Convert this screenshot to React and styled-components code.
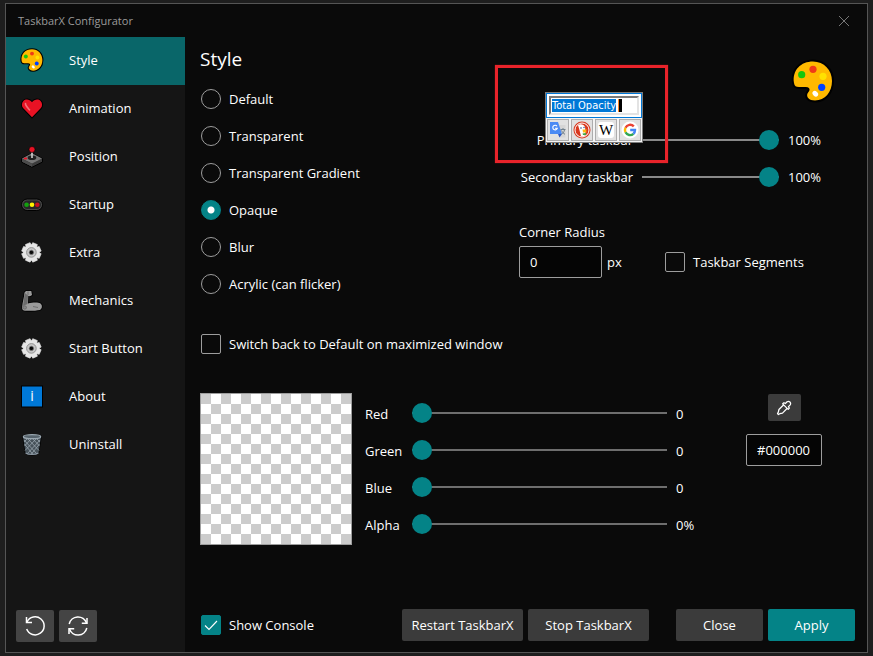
import React, { useState, useEffect, useRef } from "react";
import styled, { createGlobalStyle } from "styled-components";

const GlobalStyle = createGlobalStyle`
  * {
    box-sizing: border-box;
  }
  body {
    margin: 0;
    background: #1e1e1e;
    color: #fff;
    font-family: "Open Sans", "Noto Sans", sans-serif;
    font-size: 13px;
    line-height: 20px;
  }
  input,
  button {
    font: inherit;
    color: inherit;
    margin: 0;
  }
`;

const Desktop = styled.div`
  min-height: 100vh;
  padding: 3px 5px;
  display: flex;
`;
const Window = styled.div`
  flex: 1;
  display: flex;
  flex-direction: column;
  background: #0a0a0a;
  border: 1px solid #555;
`;
const TitleBar = styled.header`
  display: flex;
  align-items: center;
  justify-content: space-between;
  height: 33px;
  padding: 0 17px 0 12px;
  font-size: 11px;
  color: #9a9a9a;
`;
const CloseButton = styled.button`
  display: flex;
  padding: 0;
  border: none;
  background: none;
`;
const Body = styled.div`
  flex: 1;
  display: flex;
`;

const Sidebar = styled.aside`
  width: 179px;
  display: flex;
  flex-direction: column;
  justify-content: space-between;
  background: #151515;
`;
const NavLink = styled.a`
  display: flex;
  align-items: center;
  gap: 25px;
  height: 48px;
  padding: 0 0 2px 14px;
  color: #fff;
  text-decoration: none;
  background: ${(props) => (props.$active ? "#096669" : "none")};
`;
const SidebarTools = styled.div`
  display: flex;
  gap: 5px;
  padding: 0 10px 10px;
`;
const Button = styled.button`
  display: flex;
  align-items: center;
  justify-content: center;
  width: ${(props) => props.$width};
  height: ${(props) => props.$height || "32px"};
  padding: 0;
  border: none;
  border-radius: 2px;
  white-space: nowrap;
  background: ${(props) => {
    if (props.$primary) return "#048387";
    return props.$light ? "#444" : "#3b3b3b";
  }};
`;

const Main = styled.main`
  flex: 1;
  display: flex;
  flex-direction: column;
  padding: 0 12px 11px 15px;
`;
const TopArea = styled.div`
  display: flex;
  justify-content: space-between;
`;
const Title = styled.h1`
  margin: 8px 0 7px;
  font-size: 19px;
  font-weight: 400;
  line-height: 28px;
`;
const Choice = styled.label`
  display: flex;
  align-items: center;
  gap: 8px;
  height: ${(props) => props.$height || "37px"};
  padding-left: 1px;
`;
const Radio = styled.input`
  appearance: none;
  width: 20px;
  height: 20px;
  border: 1px solid #9d9d9d;
  border-radius: 50%;
  &:checked {
    border-color: #048387;
    background: radial-gradient(circle, #fff 3px, #048387 4px);
  }
`;
const CheckWrap = styled.span`
  position: relative;
  display: flex;
  & > svg {
    position: absolute;
    inset: 0;
    pointer-events: none;
  }
`;
const CheckInput = styled.input`
  appearance: none;
  width: 20px;
  height: 20px;
  border: 1px solid #9d9d9d;
  border-radius: 2px;
  &:checked {
    border-color: #048387;
    background: #048387;
  }
`;
const Slider = styled.input`
  appearance: none;
  flex: 1;
  min-width: 0;
  height: 20px;
  background: none;
  &::-webkit-slider-runnable-track {
    height: 2px;
    background: ${(props) => props.$track || "#6e6e6e"};
  }
  &::-webkit-slider-thumb {
    appearance: none;
    width: 20px;
    height: 20px;
    margin-top: -9px;
    border-radius: 50%;
    background: #048387;
  }
`;
const TextField = styled.input`
  width: ${(props) => props.$width};
  height: 32px;
  padding: 0 0 0 10px;
  border: 1px solid #9d9d9d;
  border-radius: 2px;
  background: #050505;
`;

const Opacity = styled.section`
  position: relative;
  width: 336px;
`;
const PaletteHolder = styled.div`
  display: flex;
  justify-content: flex-end;
  padding: 22px 20px 18px 0;
`;
const OpacityRow = styled.div`
  display: flex;
  align-items: center;
  gap: 9px;
  height: 37px;
  & > label {
    width: 114px;
    text-align: right;
    white-space: nowrap;
  }
  & > output {
    width: 67px;
  }
`;
const Corner = styled.div`
  padding-top: 27px;
`;
const CornerRow = styled.div`
  display: flex;
  align-items: center;
  padding-top: 4px;
  & > span {
    width: 62px;
    padding-left: 5px;
  }
`;

// red marker and the lookup popup both float over the sliders
const Marker = styled.div`
  position: absolute;
  left: -24px;
  top: 28px;
  width: 173px;
  height: 98px;
  border: 3px solid #e8232a;
  box-shadow: 0 0 1px #a0181d;
  pointer-events: none;
`;
const Popup = styled.div`
  position: absolute;
  left: 26px;
  top: 55px;
  width: 98px;
  border: 1px solid #7c7c7c;
  background: #f4f4f4;
`;
const LookupFrame = styled.div`
  padding: 2px;
  border: 1px solid #0078d7;
  background: #fff;
`;
const LookupBox = styled.div`
  display: flex;
  align-items: center;
  height: 19px;
  border: 2px solid;
  border-color: #7a7a7a #e3e3e3 #e3e3e3 #7a7a7a;
`;
const LookupInput = styled.input`
  width: 67px;
  height: 13px;
  padding: 0 0 0 1px;
  border: none;
  outline: none;
  background: #fff;
  color: #000;
  font-family: "DejaVu Sans Condensed", "DejaVu Sans", sans-serif;
  font-size: 11px;
  line-height: 13px;
  &::selection {
    background: #0078d7;
    color: #fff;
  }
`;
const Caret = styled.span`
  width: 4px;
  height: 13px;
  border-left: 1px solid #ff8728;
  background: #000;
`;
const LookupTools = styled.div`
  display: flex;
  justify-content: space-between;
  padding: 1px;
`;
const LookupButton = styled.button`
  display: flex;
  padding: 1px;
  border: 1px solid #adadad;
  background: #e1e1e1;
`;

const MaximizedOption = styled.div`
  padding-top: 23px;
`;
const ColorArea = styled.section`
  display: flex;
  align-items: flex-start;
  margin-top: 31px;
`;
const Swatch = styled.div`
  width: 152px;
  height: 152px;
  border: 1px solid #9d9d9d;
  background: repeating-conic-gradient(#fff 0 25%, #ccc 0 50%) 0 0 / 20px 20px;
`;
const Channels = styled.div`
  flex: 1;
  padding: 1px 0 0 13px;
`;
const ChannelRow = styled.div`
  display: flex;
  align-items: center;
  height: 37px;
  & > label {
    width: 47px;
    padding-top: 2px;
  }
  & > output {
    width: 33px;
    padding: 2px 0 0 9px;
  }
`;
const Picker = styled.div`
  display: flex;
  flex-direction: column;
  align-items: center;
  gap: 13px;
  padding: 1px 33px 0 46px;
`;
const Footer = styled.footer`
  display: flex;
  align-items: center;
  justify-content: space-between;
  margin-top: auto;
`;
const Actions = styled.div`
  display: flex;
  gap: 5px;
`;
const ActionGroups = styled.div`
  display: flex;
  gap: 27px;
`;

const PaletteIcon = ({ size }) => (
  <svg width={size} height={size} viewBox="0 0 44 44">
    <path
      d="M3 24C1 11 10 2.5 22 2.5C33 2.5 41 11 41 22C41 33 34 41.5 24 41.5C18 41.5 15 38 16.5 34.5C17 33 19 32 18.5 30C18 27.5 14 28 8 28C5 28 3.5 27 3 24Z"
      fill="#ffb900"
      stroke="#000"
      strokeWidth="4"
      paintOrder="stroke"
      strokeLinejoin="round"
    />
    <circle cx="10.7" cy="15.7" r="3.6" fill="#16c60c" />
    <circle cx="22" cy="10.3" r="3.6" fill="#f03a17" />
    <circle cx="32" cy="17.3" r="3.6" fill="#ffe100" />
    <circle cx="30.7" cy="28.3" r="3.6" fill="#0040ff" />
    <ellipse cx="24.3" cy="34.7" rx="3.2" ry="2.4" fill="#fff" transform="rotate(45 24.3 34.7)" />
  </svg>
);

const HeartIcon = () => (
  <svg width="24" height="24" viewBox="0 0 24 24">
    <path
      d="M12 21.3L3.3 12.3C1.5 10.3 1.4 6.8 3.4 4.9C5.5 2.8 9.5 2.8 12 6.3C14.5 2.8 18.5 2.8 20.6 4.9C22.6 6.8 22.5 10.3 20.7 12.3Z"
      fill="#e81224"
      stroke="#000"
      strokeWidth="2"
      paintOrder="stroke"
    />
    <path d="M5.5 7.5C5.3 9.5 7 11 9.5 13.8" fill="none" stroke="#f4717a" strokeWidth="1.6" strokeLinecap="round" />
  </svg>
);

const JoystickIcon = () => (
  <svg width="24" height="24" viewBox="0 0 24 24">
    <path d="M1.5 14.5L12 9L22.5 14.5V18L12 23.3L1.5 18Z" fill="#3b3b3b" stroke="#000" />
    <path d="M2 14.5L12 9.3L22 14.5L12 19.5Z" fill="#767676" />
    <path d="M2 15L12 20V22.8L2 17.8Z" fill="#4c4c4c" />
    <ellipse cx="12" cy="13.8" rx="4.3" ry="2.3" fill="#1f1f1f" />
    <path d="M12 7V14" stroke="#d0d0d0" strokeWidth="1.6" />
    <ellipse cx="5.5" cy="14.6" rx="1.8" ry="1" fill="#e81224" />
    <circle cx="12" cy="5.5" r="3" fill="#e81224" stroke="#000" strokeWidth="0.6" />
  </svg>
);

const TrafficIcon = () => (
  <svg width="24" height="24" viewBox="0 0 24 24">
    <rect x="1.5" y="7" width="21" height="11.5" rx="5.7" fill="#4a4a4a" stroke="#000" />
    <rect x="3" y="8.5" width="18" height="8.5" rx="4.2" fill="#262626" />
    <circle cx="6.6" cy="12.7" r="2.3" fill="#13a10e" />
    <circle cx="12" cy="12.7" r="2.3" fill="#fff100" />
    <circle cx="17.3" cy="12.7" r="2.3" fill="#c50f1f" />
  </svg>
);

const GearIcon = () => (
  <svg width="24" height="24" viewBox="0 0 24 24">
    <g transform="translate(11.4 12.4)">
      <circle r="9" fill="#000" />
      {[0, 45, 90, 135, 180, 225, 270, 315].map((angle) => (
        <path
          key={angle}
          d="M-3 -5L-2.5 -9.5H2.5L3 -5Z"
          fill="#e6e6e6"
          stroke="#e6e6e6"
          strokeLinejoin="round"
          strokeWidth="0.6"
          transform={`rotate(${angle + 22.5})`}
        />
      ))}
      <circle r="8" fill="#e6e6e6" />
      <circle r="4.8" fill="#c8c8c8" stroke="#8b8b8b" strokeWidth="0.9" />
      <circle r="2.2" fill="#0a0a0a" stroke="#777" strokeWidth="0.7" />
    </g>
  </svg>
);

const ArmIcon = () => (
  <svg width="24" height="24" viewBox="0 0 24 24">
    <path
      d="M4.5 4.5L6 3H11.3L12 7L10 8.3L8.3 8L8 15.500C12 14.5 18 14 20.5 15.5C22.5 17 22.5 20.5 20 22C15 23 7 23 3.8 22.5C2.2 22 2 20.5 2.2 18.5C2.5 14 4 10 4.5 4.5Z"
      fill="#9b9b9b"
      stroke="#000"
      strokeWidth="1.6"
      paintOrder="stroke"
    />
    <path d="M4.8 5L8 7.5L7.5 16L3 18Z" fill="#6b6b6b" />
    <circle cx="4.8" cy="19.5" r="1.7" fill="#868686" stroke="#5a5a5a" strokeWidth="0.6" />
    <path d="M8 3.5V7M13 18.5L18 19.5" stroke="#6b6b6b" strokeWidth="0.9" />
  </svg>
);

const InfoIcon = () => (
  <svg width="24" height="24" viewBox="0 0 24 24">
    <rect x="1" y="1.5" width="22" height="22" fill="#000" />
    <rect x="2" y="2.5" width="20" height="20" fill="#0078d7" />
    <text x="12" y="17" textAnchor="middle" fontSize="14" fill="#fff">
      i
    </text>
  </svg>
);

const TrashIcon = () => (
  <svg width="24" height="24" viewBox="0 0 24 24">
    <path d="M3 4.5L5.5 21C8 23.3 16 23.3 18.5 21L21 4.5Z" fill="#47525a" stroke="#000" strokeWidth="1.5" paintOrder="stroke" />
    <path
      d="M4 8L17 22M4.5 12L13 22.5M7 6L19 18.5M12 6L19.5 14M16 6L20 10M20 8L7 22M19.5 12L11 22.5M17 6L5 18.5M12 6L4.5 14M8 6L4 10"
      stroke="#9aa7b0"
      strokeWidth="0.8"
    />
    <path d="M5.6 21C8 23 16 23 18.4 21" fill="none" stroke="#8995a0" strokeWidth="1.2" />
    <ellipse cx="12" cy="4.7" rx="8.7" ry="2" fill="#56636c" stroke="#9aa7b0" strokeWidth="1.3" />
  </svg>
);

const UndoIcon = () => (
  <svg width="22" height="22" viewBox="0 0 22 22" fill="none" stroke="#fff" strokeWidth="1.5">
    <path d="M3 7A9 9 0 1 1 2.7 14" />
    <path d="M2.5 2V7.500H8" />
  </svg>
);

const RefreshIcon = () => (
  <svg width="22" height="22" viewBox="0 0 22 22" fill="none" stroke="#fff" strokeWidth="1.5">
    <path d="M2.2 9A9 9 0 0 1 19.5 8M19.8 13A9 9 0 0 1 2.5 14" />
    <path d="M20 3V8.200H14.800M2 19V13.800H7.200" />
  </svg>
);

const DropperIcon = () => (
  <svg width="16" height="16" viewBox="0 0 18 18" fill="none" stroke="#fff" strokeWidth="1.4" strokeLinejoin="round">
    <path d="M8.7 5.3L3.3 10.7L2.6 13.7L1.7 15.3L2.7 16.3L4.3 15.4L7.3 14.7L12.7 9.3" />
    <path d="M7.5 4.3L9 3L10.5 4L12.5 2C14.8 0.4 17.4 3.2 16 5.5L14 7.5L15 9L13.7 10.5Z" />
  </svg>
);

const CheckIcon = () => (
  <svg width="20" height="20" viewBox="0 0 20 20" fill="none" stroke="#fff" strokeWidth="1.1">
    <path d="M4 10.5L8 14.5L16 6" />
  </svg>
);

const TranslateIcon = () => (
  <svg width="18" height="18" viewBox="0 0 18 18">
    <path d="M7 4H16.5V16.5H11Z" fill="#d5d5d5" />
    <path d="M1 1H9L13 13H1Z" fill="#4a8af4" />
    <path d="M9 13H13L10.5 16.5Z" fill="#2a56c6" />
    <path d="M8 5.2A2.3 2.3 0 1 0 8.3 7.3H6" fill="none" stroke="#fff" strokeWidth="1.1" />
    <path d="M11.5 8.5H16.5M14 7V8.5M15.5 9C15 11.5 13.5 12.5 12.3 13.3M12.5 9.5C13.5 11.5 14.5 12.5 16 13.3" fill="none" stroke="#70808c" />
  </svg>
);

const DuckIcon = () => (
  <svg width="18" height="18" viewBox="0 0 18 18">
    <circle cx="9" cy="9" r="8.5" fill="#d9381e" />
    <circle cx="9" cy="9" r="7" fill="#d9381e" stroke="#fff" strokeWidth="1" />
    <path d="M5 4C7 2.5 11 3 12 6C12.5 8 12 9 12 10L13 14L10 15.6L8 15.3L6.2 8Z" fill="#fff" />
    <path d="M9.5 8.5H14L13 10L14 11.2L10 11.5Z" fill="#fdb913" />
    <path d="M9.5 12.5L13 12V14L10 14Z" fill="#3fa845" />
    <circle cx="8" cy="7" r="0.8" fill="#2d4f8e" />
    <circle cx="11" cy="6.5" r="0.7" fill="#2d4f8e" />
  </svg>
);

const WikiIcon = () => (
  <svg width="18" height="18" viewBox="0 0 18 18">
    <rect x="1" y="1" width="16" height="16" rx="3" fill="#fff" />
    <text x="9" y="14" textAnchor="middle" fontFamily="Liberation Serif, serif" fontSize="15" fontWeight="400" fill="#000">
      W
    </text>
  </svg>
);

const GoogleIcon = () => (
  <svg width="18" height="18" viewBox="0 0 18 18" fill="none" strokeWidth="2.4">
    <circle cx="9" cy="9" r="8.5" fill="#fff" />
    <path d="M12.8 5.4A5.1 5.1 0 0 0 4.5 6.7" stroke="#ea4335" />
    <path d="M4.5 6.7A5.1 5.1 0 0 0 4.5 11.3" stroke="#fbbc05" />
    <path d="M4.5 11.3A5.1 5.1 0 0 0 12.4 12.8" stroke="#34a853" />
    <path d="M12.4 12.8A5.1 5.1 0 0 0 14 9H9.2" stroke="#4285f4" />
  </svg>
);

const pages = [
  { name: "Style", icon: <PaletteIcon size={24} /> },
  { name: "Animation", icon: <HeartIcon /> },
  { name: "Position", icon: <JoystickIcon /> },
  { name: "Startup", icon: <TrafficIcon /> },
  { name: "Extra", icon: <GearIcon /> },
  { name: "Mechanics", icon: <ArmIcon /> },
  { name: "Start Button", icon: <GearIcon /> },
  { name: "About", icon: <InfoIcon /> },
  { name: "Uninstall", icon: <TrashIcon /> },
];

const styles = [
  "Default",
  "Transparent",
  "Transparent Gradient",
  "Opaque",
  "Blur",
  "Acrylic (can flicker)",
];

const CheckBox = ({ label, height, defaultChecked = false }) => {
  const [checked, setChecked] = useState(defaultChecked);
  return (
    <Choice $height={height}>
      <CheckWrap>
        <CheckInput
          type="checkbox"
          checked={checked}
          onChange={() => setChecked(!checked)}
        />
        {checked && <CheckIcon />}
      </CheckWrap>
      {label}
    </Choice>
  );
};

const OpacitySlider = ({ id, label }) => {
  const [value, setValue] = useState(100);
  return (
    <OpacityRow>
      <label htmlFor={id}>{label}</label>
      <Slider
        id={id}
        type="range"
        $track="#898989"
        value={value}
        onChange={(e) => setValue(e.target.value)}
      />
      <output htmlFor={id}>{value}%</output>
    </OpacityRow>
  );
};

const ChannelSlider = ({ label, max, unit }) => {
  const [value, setValue] = useState(0);
  return (
    <ChannelRow>
      <label htmlFor={label}>{label}</label>
      <Slider
        id={label}
        type="range"
        max={max}
        value={value}
        onChange={(e) => setValue(e.target.value)}
      />
      <output htmlFor={label}>
        {value}
        {unit}
      </output>
    </ChannelRow>
  );
};

const LookupPopup = () => {
  const inputRef = useRef(null);
  useEffect(() => {
    inputRef.current.focus();
    inputRef.current.select();
  }, []);
  return (
    <Popup>
      <LookupFrame>
        <LookupBox>
          <LookupInput
            ref={inputRef}
            type="text"
            aria-label="Search text"
            defaultValue="Total Opacity"
          />
          <Caret />
        </LookupBox>
      </LookupFrame>
      <LookupTools>
        <LookupButton aria-label="Translate">
          <TranslateIcon />
        </LookupButton>
        <LookupButton aria-label="DuckDuckGo">
          <DuckIcon />
        </LookupButton>
        <LookupButton aria-label="Wikipedia">
          <WikiIcon />
        </LookupButton>
        <LookupButton aria-label="Google">
          <GoogleIcon />
        </LookupButton>
      </LookupTools>
    </Popup>
  );
};

const App = () => {
  const [page, setPage] = useState("Style");
  const [style, setStyle] = useState("Opaque");

  return (
    <Desktop>
      <GlobalStyle />
      <Window>
        <TitleBar>
          TaskbarX Configurator
          <CloseButton aria-label="Close window">
            <svg width="12" height="12" viewBox="0 0 12 12" stroke="#777">
              <path d="M1 1L11 11M11 1L1 11" />
            </svg>
          </CloseButton>
        </TitleBar>
        <Body>
          <Sidebar>
            <nav>
              {pages.map((item) => (
                <NavLink
                  key={item.name}
                  href="#"
                  $active={item.name === page}
                  onClick={() => setPage(item.name)}
                >
                  {item.icon}
                  {item.name}
                </NavLink>
              ))}
            </nav>
            <SidebarTools>
              <Button $width="38px" $light aria-label="Undo">
                <UndoIcon />
              </Button>
              <Button $width="38px" $light aria-label="Reload">
                <RefreshIcon />
              </Button>
            </SidebarTools>
          </Sidebar>
          <Main>
            <TopArea>
              <div>
                <Title>Style</Title>
                {styles.map((name) => (
                  <Choice key={name}>
                    <Radio
                      type="radio"
                      name="style"
                      checked={name === style}
                      onChange={() => setStyle(name)}
                    />
                    {name}
                  </Choice>
                ))}
              </div>
              <Opacity>
                <PaletteHolder>
                  <PaletteIcon size={44} />
                </PaletteHolder>
                <OpacitySlider id="primary" label="Primary taskbar" />
                <OpacitySlider id="secondary" label="Secondary taskbar" />
                <Corner>
                  <label htmlFor="corner">Corner Radius</label>
                  <CornerRow>
                    <TextField id="corner" type="text" $width="83px" defaultValue="0" />
                    <span>px</span>
                    <CheckBox label="Taskbar Segments" height="32px" />
                  </CornerRow>
                </Corner>
                <LookupPopup />
                <Marker />
              </Opacity>
            </TopArea>
            <MaximizedOption>
              <CheckBox label="Switch back to Default on maximized window" />
            </MaximizedOption>
            <ColorArea>
              <Swatch />
              <Channels>
                <ChannelSlider label="Red" max={255} />
                <ChannelSlider label="Green" max={255} />
                <ChannelSlider label="Blue" max={255} />
                <ChannelSlider label="Alpha" max={100} unit="%" />
              </Channels>
              <Picker>
                <Button $width="33px" $height="27px" aria-label="Pick color">
                  <DropperIcon />
                </Button>
                <TextField
                  type="text"
                  aria-label="Hex color"
                  $width="76px"
                  defaultValue="#000000"
                />
              </Picker>
            </ColorArea>
            <Footer>
              <CheckBox label="Show Console" height="32px" defaultChecked />
              <ActionGroups>
                <Actions>
                  <Button $width="121px">Restart TaskbarX</Button>
                  <Button $width="121px">Stop TaskbarX</Button>
                </Actions>
                <Actions>
                  <Button $width="87px">Close</Button>
                  <Button $width="87px" $primary>
                    Apply
                  </Button>
                </Actions>
              </ActionGroups>
            </Footer>
          </Main>
        </Body>
      </Window>
    </Desktop>
  );
};

export default App;
